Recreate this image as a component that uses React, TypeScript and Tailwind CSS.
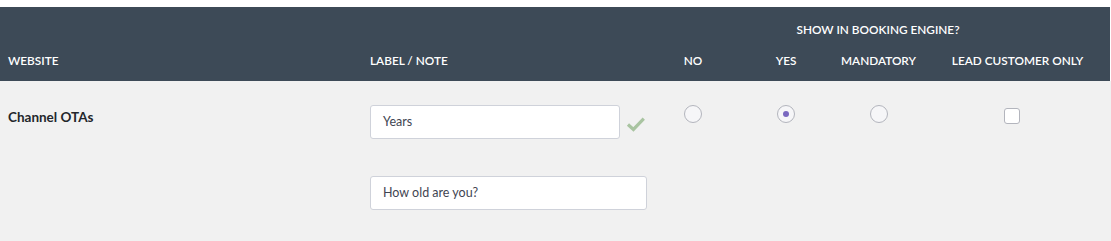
import React from "react";

function Radio({ checked }: { checked?: boolean }) {
  return (
    <span className="flex h-[18px] w-[18px] items-center justify-center rounded-full border border-[#b3b5bd] bg-[#f6f6f8]">
      {checked && <span className="h-[6px] w-[6px] rounded-full bg-[#7a68c0]" />}
    </span>
  );
}

export default function App() {
  return (
    <div className="w-[1111px] h-[241px] bg-white pt-[7px] text-[#2b2f36]" style={{ fontFamily: "Lato, 'Open Sans', sans-serif" }}>
      <div className="mr-[1px] h-[74px] bg-[#3d4a57] text-white text-[11.8px] font-semibold uppercase">
        <div className="flex h-[44px] items-center">
          <div className="w-[362px]" />
          <div className="w-[284px]" />
          <div className="flex-1 text-center pt-[1px]">Show in booking engine?</div>
        </div>
        <div className="flex h-[30px] items-start pt-[1px]">
          <div className="w-[362px] pl-[8px]">Website</div>
          <div className="w-[284px] pl-[8px]">Label / Note</div>
          <div className="w-[94px] text-center">No</div>
          <div className="w-[92px] text-center">Yes</div>
          <div className="w-[93px] text-center">Mandatory</div>
          <div className="flex-1 text-center">Lead customer only</div>
        </div>
      </div>
      <div className="flex h-[160px] bg-[#f1f1f1] pt-[24px]">
        <div className="w-[362px] pl-[8px] pt-[2px] text-[13.5px] font-bold text-[#23262b]">Channel OTAs</div>
        <div className="w-[284px] pl-[8px]">
          <div className="flex items-center">
            <div className="flex h-[34px] w-[253px] items-center rounded-[3px] border border-[#cfd2da] bg-white pl-[12px] text-[12.5px] text-[#3f4552]">Years</div>
            <svg className="ml-[6px] mt-[3px]" width="20" height="16" viewBox="0 0 20 16">
              <path d="M2 8.5 L7.5 13.5 L18 2.5" fill="none" stroke="#a9c4a1" strokeWidth="3.2" />
            </svg>
          </div>
          <div className="mt-[37px] flex h-[34px] w-[277px] items-center rounded-[3px] border border-[#cfd2da] bg-white pl-[12px] text-[12.5px] text-[#3f4552]">How old are you?</div>
        </div>
        <div className="flex w-[94px] justify-center"><Radio /></div>
        <div className="flex w-[92px] justify-center"><Radio checked /></div>
        <div className="flex w-[93px] justify-center"><Radio /></div>
        <div className="flex flex-1 justify-center pt-[3px] pr-[12px]">
          <span className="h-[16px] w-[16px] rounded-[3px] border border-[#b3b5bd] bg-white" />
        </div>
      </div>
    </div>
  );
}
